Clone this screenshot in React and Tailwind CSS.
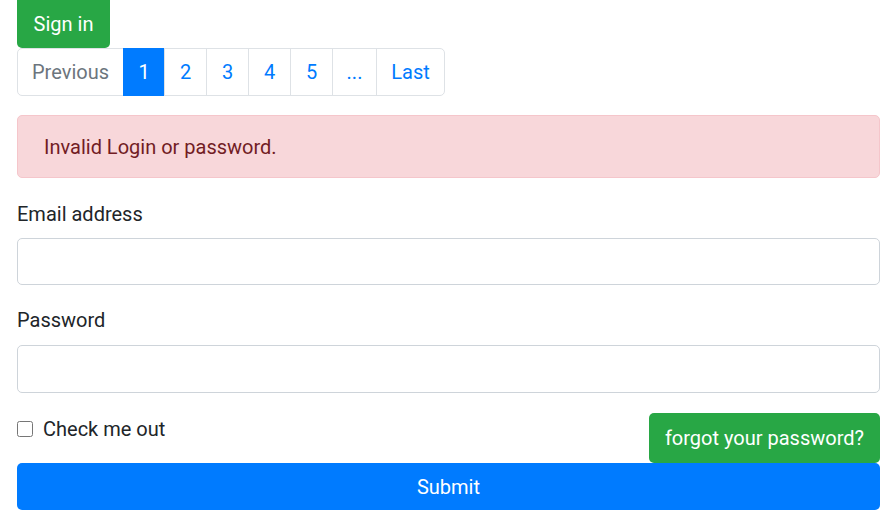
const pages = ["1", "2", "3", "4", "5", "..."];

export default function App() {
  return (
    <div className="px-[17px] pr-[12px] text-[20px] text-[#212529] bg-white min-h-[518px]" style={{ fontFamily: "Roboto, 'Noto Sans', sans-serif" }}>
      {/* Sign in */}
      <button className="block h-[48px] w-[93px] bg-[#28a745] text-white rounded-b-[5px] leading-[30px]">Sign in</button>

      {/* Pagination */}
      <nav className="flex h-[48px] w-fit">
        <span className="flex items-center justify-center w-[107px] border border-[#dee2e6] rounded-l-[5px] text-[#6c757d]">Previous</span>
        {pages.map((p, i) => (
          <a
            key={p}
            className={
              i === 0
                ? "flex items-center justify-center w-[42px] bg-[#007bff] border border-[#007bff] text-white -ml-px"
                : p === "..."
                ? "flex items-center justify-center w-[45px] border border-[#dee2e6] text-[#007bff] -ml-px"
                : "flex items-center justify-center w-[43px] border border-[#dee2e6] text-[#007bff] -ml-px"
            }
          >
            {p}
          </a>
        ))}
        <a className="flex items-center justify-center w-[69px] border border-[#dee2e6] rounded-r-[5px] text-[#007bff] -ml-px">Last</a>
      </nav>

      {/* Alert */}
      <div className="mt-[19px] h-[63px] flex items-center px-[26px] bg-[#f8d7da] border border-[#f5c6cb] rounded-[5px] text-[#721c24]">
        Invalid Login or password.
      </div>

      {/* Email */}
      <label className="block mt-[21px] leading-[30px]">Email address</label>
      <input type="email" className="block mt-[9px] w-full h-[47px] border border-[#ced4da] rounded-[5px] px-[15px] outline-none" />

      {/* Password */}
      <label className="block mt-[20px] leading-[30px]">Password</label>
      <input type="password" className="block mt-[10px] w-full h-[48px] border border-[#ced4da] rounded-[5px] px-[15px] outline-none" />

      {/* Check + forgot */}
      <div className="flex justify-between items-start mt-[20px]">
        <label className="flex items-center gap-[10px] mt-[1px] leading-[30px]">
          <input type="checkbox" className="w-[16px] h-[16px] accent-[#007bff]" />
          Check me out
        </label>
        <button className="h-[50px] px-[16px] bg-[#28a745] text-white rounded-[5px]">forgot your password?</button>
      </div>

      {/* Submit */}
      <button className="block w-full h-[47px] bg-[#007bff] text-white rounded-[5px]">Submit</button>
    </div>
  );
}
